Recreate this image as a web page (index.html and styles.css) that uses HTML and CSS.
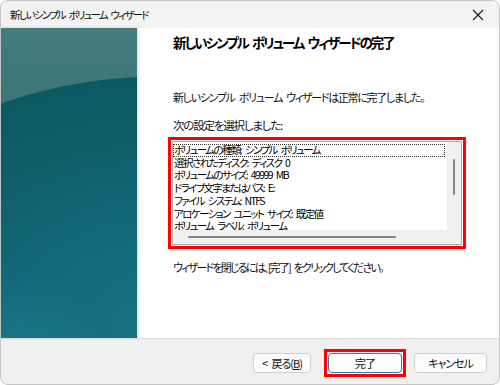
FILE: index.html
```html
<!DOCTYPE html>
<html lang="ja">
<head>
<meta charset="utf-8">
<title>新しいシンプル ボリューム ウィザード</title>
<link rel="stylesheet" href="styles.css">
</head>
<body>
<div class="window">
  <div class="titlebar">
    <span class="title">新しいシンプル ボリューム ウィザード</span>
    <svg class="close" width="12" height="12" viewBox="0 0 12 12"><path d="M1 1L11 11M11 1L1 11" stroke="#1a1a1a" stroke-width="1.1" fill="none"/></svg>
  </div>
  <div class="main">
    <div class="sidebar"></div>
    <div class="content">
      <h1 class="heading">新しいシンプル ボリューム ウィザードの完了</h1>
      <p class="text done-msg">新しいシンプル ボリューム ウィザードは正常に完了しました。</p>
      <p class="text label">次の設定を選択しました:</p>
      <div class="highlight list-highlight">
        <div class="listbox">
          <div class="items">
            <div class="item focus">ボリュームの種類: シンプル ボリューム</div>
            <div class="item">選択されたディスク: ディスク 0</div>
            <div class="item">ボリュームのサイズ: 49999 MB</div>
            <div class="item">ドライブ文字またはパス: E:</div>
            <div class="item">ファイル システム: NTFS</div>
            <div class="item">アロケーション ユニット サイズ: 既定値</div>
            <div class="item">ボリューム ラベル: ボリューム</div>
          </div>
          <div class="vscroll"><div class="vthumb"></div></div>
          <div class="hscroll"><div class="hthumb"></div></div>
          <div class="corner"></div>
        </div>
      </div>
      <p class="text close-msg">ウィザードを閉じるには、[完了] をクリックしてください。</p>
    </div>
  </div>
  <div class="footer">
    <button class="btn back">&lt; 戻る(<u>B</u>)</button>
    <div class="highlight btn-highlight"><button class="btn default">完了</button></div>
    <button class="btn cancel">キャンセル</button>
  </div>
</div>
</body>
</html>
```

FILE: styles.css
```css
html, body {
  margin: 0;
  padding: 0;
  background: #ffffff;
}
body {
  font-family: "Noto Sans CJK JP", "Noto Sans", sans-serif;
  font-size: 12px;
  color: #111;
  font-feature-settings: "palt";
}
.window {
  width: 500px;
  height: 385px;
  box-sizing: border-box;
  border: 1px solid #c4c4c4;
  border-radius: 8px;
  overflow: hidden;
  display: flex;
  flex-direction: column;
  background: #f0f0f0;
}
.titlebar {
  height: 27px;
  flex: none;
  display: flex;
  align-items: center;
  justify-content: space-between;
  padding: 0 15px 0 9px;
  background: #f3f3f3;
}
.title {
  font-size: 10.5px;
  letter-spacing: -1.8px;
  word-spacing: 3px;
  color: #111;
}
.close {
  display: block;
}
.main {
  flex: none;
  height: 310px;
  display: flex;
  background: #ffffff;
}
.sidebar {
  width: 136px;
  flex: none;
  background:
    radial-gradient(ellipse 120px 90px at -10px 330px, rgba(40,150,160,0.35), rgba(40,150,160,0) 100%),
    radial-gradient(ellipse 355px 252px at 160px 300px, #18737f 0%, #13697a 40%, #0e5e68 75%, #0b5961 99.6%, rgba(0,0,0,0) 100%),
    linear-gradient(180deg, #447b7b 0%, #3b7575 30%, #2f6e71 100%);
  box-shadow: 1px 0 3px rgba(0,0,0,0.18);
}
.content {
  flex: 1;
  padding: 4px 0 0 36px;
}
.heading {
  margin: 0;
  font-size: 13.5px;
  line-height: 20px;
  font-weight: bold;
  letter-spacing: -2px;
  word-spacing: 3px;
  color: #000;
}
.text {
  margin: 0;
  font-size: 11px;
  line-height: 16px;
  letter-spacing: -1.3px;
  word-spacing: 3px;
}
.done-msg { margin-top: 37px; }
.label { margin-top: 12px; font-size: 11.5px; letter-spacing: -1.2px; }
.close-msg {
  margin-top: 10px;
  letter-spacing: -1.8px;
}
.highlight {
  border: 3px solid #ff0000;
  padding: 1px;
}
.list-highlight {
  margin: 4px 0 0 -5px;
  width: 290px;
}
.listbox {
  border: 1px solid #adadad;
  height: 102px;
  display: grid;
  grid-template-columns: 1fr 14px;
  grid-template-rows: 1fr 14px;
  background: #f0f0f0;
}
.items {
  background: #fff;
  overflow: hidden;
  padding-top: 2px;
}
.item {
  font-size: 10.5px;
  line-height: 12.7px;
  padding-left: 1px;
  letter-spacing: -1.6px;
  word-spacing: 3px;
  white-space: nowrap;
  color: #000;
}
.item.focus {
  outline: 1px dotted #333;
  outline-offset: -1px;
  margin-right: 2px;
}
.vscroll {
  display: flex;
  justify-content: center;
  padding-top: 17px;
}
.vthumb {
  width: 2px;
  height: 36px;
  border-radius: 1px;
  background: #858585;
}
.hscroll {
  padding: 6px 0 0 15px;
}
.hthumb {
  width: 208px;
  height: 2px;
  border-radius: 1px;
  background: #858585;
}
.footer {
  flex: 1;
  border-top: 1px solid #dadada;
  display: flex;
  align-items: center;
  justify-content: flex-end;
  padding: 2px 12px 0 0;
}
.btn {
  font-family: "Noto Sans CJK JP", "Noto Sans", sans-serif;
  font-feature-settings: "palt";
  font-size: 11px;
  letter-spacing: -1px;
  word-spacing: 3px;
  height: 20px;
  padding: 0;
  background: #fdfdfd;
  border: 1px solid #d0d0d0;
  border-radius: 4px;
  color: #111;
  display: block;
}
.btn u { text-decoration: underline; }
.back { width: 58px; margin-right: 13px; }
.btn-highlight { margin-right: 8px; }
.default { width: 74px; border-color: #3f78b8; }
.cancel { width: 73px; }
```
